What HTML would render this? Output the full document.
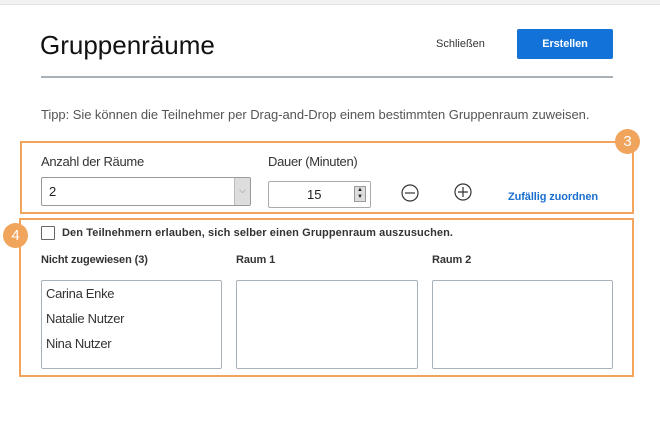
<!DOCTYPE html>
<html><head><style>
body{margin:0;width:660px;height:441px;background:#fff;font-family:"Liberation Sans",sans-serif;position:relative;overflow:hidden;color:#222}
.a{position:absolute}
.top{left:0;top:0;width:660px;height:4px;background:#f2f2f2;border-bottom:1px solid #e4e4e4}
.box{border:2px solid #f0a45c;box-sizing:border-box}
.c{width:25px;height:25px;border-radius:50%;background:#f0a45c;color:#fff;font-size:15px;text-align:center;line-height:25px}
.lst{border:1px solid #a9b1b9;border-radius:2px;box-sizing:border-box;height:89px;top:280px}
.nm{font-size:13px;color:#333;left:46px;letter-spacing:-0.3px}
.hd{font-size:11px;font-weight:bold;color:#333;top:254px;letter-spacing:-0.1px}
</style></head><body>
<div class="a top"></div>
<div class="a" style="left:40px;top:30px;font-size:26px;color:#111;letter-spacing:0px">Gruppenräume</div>
<div class="a" style="left:436px;top:38px;font-size:11px;color:#333;letter-spacing:0px">Schließen</div>
<div class="a" style="left:517px;top:29px;width:96px;height:30px;background:#1272d8;border-radius:2px;color:#fff;font-size:11px;font-weight:bold;text-align:center;line-height:30px;letter-spacing:-0.1px">Erstellen</div>
<div class="a" style="left:41px;top:76px;width:572px;height:2px;background:#a8b0b8"></div>
<div class="a" style="left:41px;top:107px;font-size:13px;color:#555;letter-spacing:-0.05px">Tipp: Sie können die Teilnehmer per Drag-and-Drop einem bestimmten Gruppenraum zuweisen.</div>
<div class="a box" style="left:20px;top:141px;width:614px;height:73px"></div>
<div class="a c" style="left:615px;top:129px">3</div>
<div class="a" style="left:41px;top:154px;font-size:13px;color:#333;letter-spacing:-0.3px">Anzahl der Räume</div>
<div class="a" style="left:268px;top:154px;font-size:13px;color:#333;letter-spacing:-0.3px">Dauer (Minuten)</div>
<div class="a" style="left:41px;top:177px;width:210px;height:29px;border:1px solid #999;box-sizing:border-box;border-radius:2px"><span class="a" style="left:7px;top:6px;font-size:13px">2</span><div class="a" style="right:0;top:0;width:15px;height:27px;background:#ddd;border-left:1px solid #bbb;color:#888;font-size:9px;text-align:center;line-height:25px">⌵</div></div>
<div class="a" style="left:268px;top:181px;width:103px;height:27px;border:1px solid #aaa;box-sizing:border-box;border-radius:2px"><span class="a" style="left:38px;top:5px;font-size:13px">15</span><div class="a" style="left:85px;top:4px;width:12px;height:16px;background:#ddd;border:1px solid #999;box-sizing:border-box;font-size:6px;line-height:7px;text-align:center">▲<br>▼</div></div>
<svg class="a" style="left:400px;top:183px" width="20" height="20"><circle cx="10" cy="10" r="8" fill="none" stroke="#333" stroke-width="1.2"/><path d="M5 10H15" stroke="#333" stroke-width="1.2"/></svg>
<svg class="a" style="left:453px;top:182px" width="20" height="20"><circle cx="10" cy="10" r="8" fill="none" stroke="#333" stroke-width="1.2"/><path d="M5 10H15M10 5V15" stroke="#333" stroke-width="1.2"/></svg>
<div class="a" style="left:508px;top:191px;font-size:11px;font-weight:bold;color:#1a6fd0;letter-spacing:-0.1px">Zufällig zuordnen</div>
<div class="a box" style="left:19px;top:218px;width:615px;height:159px"></div>
<div class="a c" style="left:3px;top:223px">4</div>
<div class="a" style="left:41px;top:226px;width:14px;height:14px;border:1px solid #666;box-sizing:border-box;border-radius:1px"></div>
<div class="a" style="left:62px;top:227px;font-size:11px;font-weight:bold;color:#333;letter-spacing:0.1px">Den Teilnehmern erlauben, sich selber einen Gruppenraum auszusuchen.</div>
<div class="a hd" style="left:41px">Nicht zugewiesen (3)</div>
<div class="a hd" style="left:236px">Raum 1</div>
<div class="a hd" style="left:432px">Raum 2</div>
<div class="a lst" style="left:41px;width:181px"></div>
<div class="a lst" style="left:236px;width:182px"></div>
<div class="a lst" style="left:432px;width:181px"></div>
<div class="a nm" style="top:286px">Carina Enke</div>
<div class="a nm" style="top:311px">Natalie Nutzer</div>
<div class="a nm" style="top:336px">Nina Nutzer</div>
</body></html>
